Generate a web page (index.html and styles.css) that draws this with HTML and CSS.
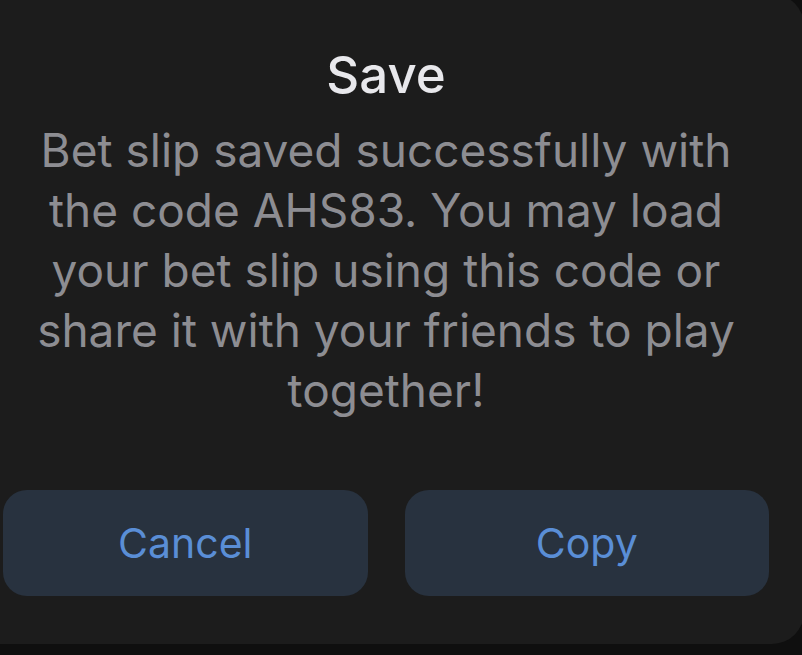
FILE: index.html
```html
<!DOCTYPE html>
<html lang="en">

<head>
    <meta charset="UTF-8">
    <meta name="viewport" content="width=device-width, initial-scale=1.0">
    <title>Save</title>
    <link rel="stylesheet" href="styles.css">
</head>

<body>
    <div class="dialog" role="dialog" aria-labelledby="dialogTitle">
        <h2 id="dialogTitle" class="dialog-title">Save</h2>
        <p class="dialog-message">
            Bet slip saved successfully with<br>
            the code AHS83. You may load<br>
            your bet slip using this code or<br>
            share it with your friends to play<br>
            together!
        </p>
        <div class="dialog-actions">
            <button type="button" class="dialog-btn">Cancel</button>
            <button type="button" class="dialog-btn">Copy</button>
        </div>
    </div>
</body>

</html>
```

FILE: styles.css
```css
body {
    margin: 0;
    height: 100vh;
    overflow: hidden;
    background-color: #0f0f0f;
    font-family: Inter, "Liberation Sans", Arial, sans-serif;
}

.dialog {
    box-sizing: border-box;
    width: 836px;
    height: 650px;
    margin: -6px 0 0 -32px;
    padding: 51px 35px 0;
    background-color: #1c1c1c;
    border-radius: 32px;
    text-align: center;
}

.dialog-title {
    margin: 0;
    font-size: 51px;
    line-height: 60px;
    font-weight: 500;
    color: #e8e8ec;
}

.dialog-message {
    margin: 15px 0 0;
    font-size: 46px;
    line-height: 60px;
    font-weight: 400;
    color: #8d8d92;
}

.dialog-actions {
    display: flex;
    gap: 37px;
    margin-top: 70px;
}

.dialog-btn {
    flex: 1;
    height: 106px;
    border: none;
    border-radius: 24px;
    background-color: #28323f;
    color: #5a8ed6;
    font-family: inherit;
    font-size: 41px;
    font-weight: 400;
    cursor: pointer;
}
```
